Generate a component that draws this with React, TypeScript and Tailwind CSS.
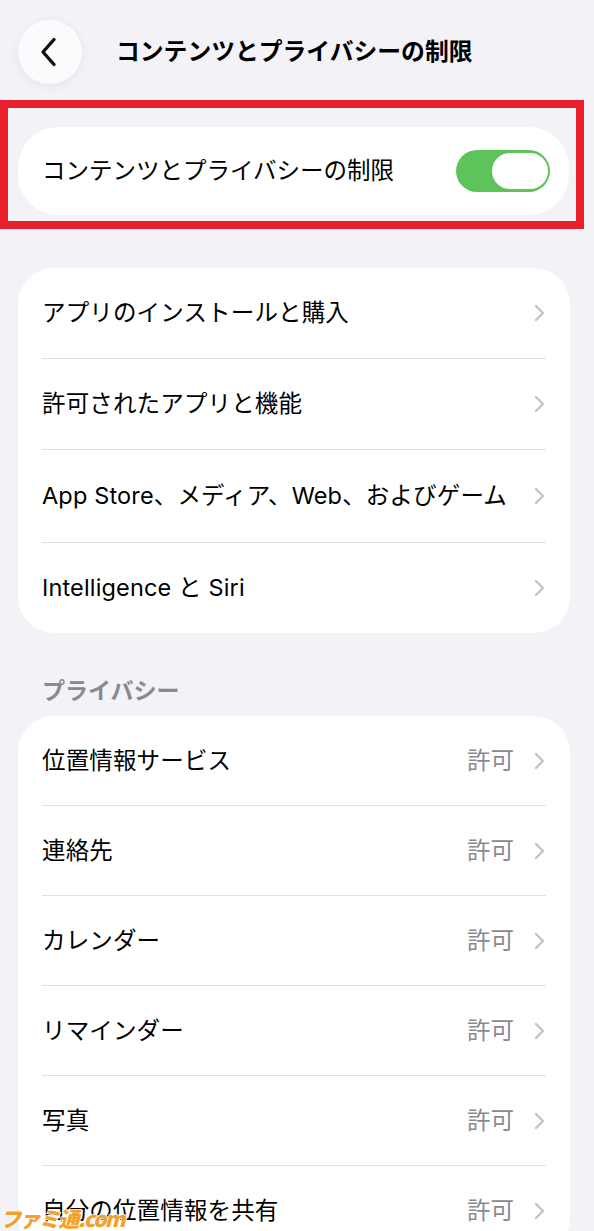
import React from "react";

const FONT = 'Inter, "Noto Sans CJK JP", "Noto Sans", sans-serif';

function Chevron() {
  return (
    <svg width="11" height="18" viewBox="0 0 11 18" fill="none" className="shrink-0">
      <path d="M2 2 L9 9 L2 16" stroke="#c4c4c7" strokeWidth="2.4" strokeLinecap="round" strokeLinejoin="round" />
    </svg>
  );
}

function Row({ label, value, h = "h-[90px]" }: { label: string; value?: string; h?: string }) {
  return (
    <div className={`flex items-center justify-between ${h}`}>
      <span className="text-[23.5px] text-black whitespace-nowrap tracking-[0.15px]">{label}</span>
      <div className="flex items-center gap-[20px] pr-[1px]">
        {value && <span className="text-[23.5px] text-[#8a8a8e]">{value}</span>}
        <Chevron />
      </div>
    </div>
  );
}

function Divider() {
  return <div className="h-px bg-[#e2e2e6]" />;
}

export default function App() {
  const privacy = ["位置情報サービス", "連絡先", "カレンダー", "リマインダー", "写真", "自分の位置情報を共有"];
  return (
    <div className="relative w-[594px] h-[1231px] overflow-hidden bg-[#f2f2f7]" style={{ fontFamily: FONT }}>
      {/* Header */}
      <div className="flex items-center pt-[20px]">
        <div className="ml-[18px] w-[64px] h-[64px] rounded-full bg-[#fbfbfd] shadow-[0_2px_12px_rgba(0,0,0,0.06)] flex items-center justify-center">
          <svg width="17" height="30" viewBox="0 0 17 30" fill="none" className="-ml-[3px]">
            <path d="M14 2.5 L3 15 L14 27.5" stroke="#111" strokeWidth="3.4" strokeLinecap="round" strokeLinejoin="round" />
          </svg>
        </div>
        <h1 className="ml-[34px] text-[23.8px] font-bold text-black">コンテンツとプライバシーの制限</h1>
      </div>

      {/* Highlighted toggle card */}
      <div className="mt-[16px] w-[584px] border-[8px] border-[#e8202b] pl-[10px] pr-[7px] pt-[19px] pb-[6px]">
        <div className="h-[88px] rounded-[40px] bg-white flex items-center justify-between pl-[24px] pr-[19px]">
          <span className="text-[23.5px] text-black">コンテンツとプライバシーの制限</span>
          <div className="w-[94px] h-[42px] rounded-full bg-[#5fc35c] flex items-center justify-end p-[3px] pr-[2px]">
            <div className="w-[56px] h-[36px] rounded-full bg-white" />
          </div>
        </div>
      </div>

      {/* Card 1 */}
      <div className="mt-[39px] ml-[18px] w-[552px] rounded-[36px] bg-white px-[24px]">
        <Row label="アプリのインストールと購入" />
        <Divider />
        <Row label="許可されたアプリと機能" />
        <Divider />
        <Row label="App Store、メディア、Web、およびゲーム" h="h-[92px]" />
        <Divider />
        <Row label="Intelligence と Siri" />
      </div>

      {/* Privacy section */}
      <div className="mt-[44px] ml-[42px] text-[23px] font-semibold text-[#8a8a8e] leading-[28px]">プライバシー</div>
      <div className="mt-[11px] ml-[18px] w-[552px] rounded-[36px] bg-white px-[24px]">
        {privacy.map((p, i) => (
          <React.Fragment key={p}>
            {i > 0 && <Divider />}
            <Row label={p} value="許可" h="h-[89px]" />
          </React.Fragment>
        ))}
      </div>

      {/* Watermark */}
      <div
        className="absolute left-0 bottom-[-2px] text-[21px] leading-[30px] font-black italic text-[#f5a02a] tracking-[-1.5px] [-webkit-text-stroke:1.5px_#fff] [paint-order:stroke_fill]"
        style={{ fontFamily: '"Noto Sans CJK JP", sans-serif' }}
      >
        ファミ通.com
      </div>
    </div>
  );
}
